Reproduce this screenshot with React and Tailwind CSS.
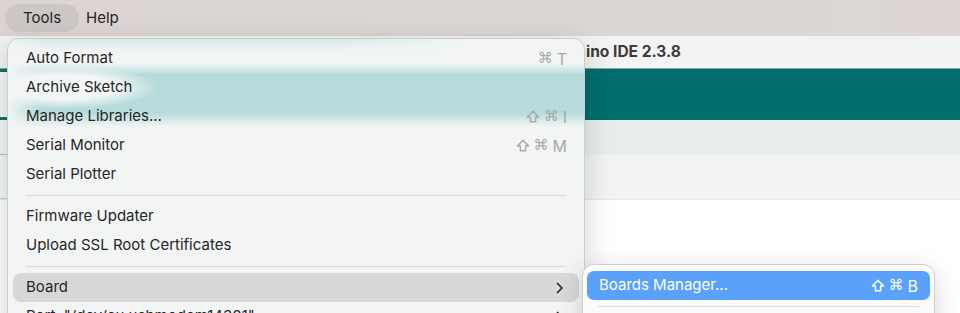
const Chevron = ({ className = '' }) => (
  <svg width="8" height="12" viewBox="0 0 8 12" className={className}>
    <path d="M1.5 1.5 L6 6 L1.5 10.5" fill="none" stroke="currentColor" strokeWidth="1.7" strokeLinecap="round" strokeLinejoin="round" />
  </svg>
);

const Shift = () => (
  <svg width="14" height="13" viewBox="0 0 14 13" className="shrink-0">
    <path d="M7 1.2 L12.6 7 H9.6 V11.8 H4.4 V7 H1.4 Z" fill="none" stroke="currentColor" strokeWidth="1.5" strokeLinejoin="round" />
  </svg>
);

const Keys = ({ shift, k }) => (
  <span className="flex items-center gap-[4px] font-['Inter',sans-serif] text-[16px]">
    {shift && <Shift />}
    <span className="font-['DejaVu_Sans',sans-serif] text-[15px]">⌘</span>
    <span>{k}</span>
  </span>
);

const Item = ({ label, shift, k, sub, active }) => (
  <div className={`relative h-[29px] mx-[5px] px-[13px] rounded-[8px] flex items-center justify-between ${active ? 'bg-[#d8d8d8]' : ''}`}>
    <span>{label}</span>
    {k && <span className="text-[#a8a9a9] mr-[-1px]"><Keys shift={shift} k={k} /></span>}
    {sub && <Chevron className="text-[#2a2a2a] mr-[2px]" />}
  </div>
);

const Sep = () => (
  <div className="relative h-[13px] flex items-center px-[18px]">
    <div className="h-px w-full bg-[#d9dcdc]" />
  </div>
);

export default function App() {
  return (
    <div className="relative w-[960px] h-[313px] overflow-hidden font-['Inter','Liberation_Sans',sans-serif] text-[15px] text-[#262626]">
      {/* macOS menu bar */}
      <div className="h-9 bg-gradient-to-r from-[#dcd4d2] via-[#dad7d4] to-[#ddd6d5] flex items-center pl-[5px]">
        <div className="h-[28px] px-[18px] rounded-full bg-[#cdc8c5] flex items-center">Tools</div>
        <div className="ml-[7px]">Help</div>
      </div>

      {/* IDE window behind */}
      <div className="flex flex-col h-[277px]">
        <div className="h-[33px] bg-[#f3f3f3] border-b border-[#8fa0a0] flex items-center">
          <div className="w-[585px]" />
          <span className="font-bold text-[#3b3b3b] text-[15.5px] ml-[1px]">ino IDE 2.3.8</span>
        </div>
        <div className="h-[51px] flex">
          <div className="w-[8px] bg-[#f7f8f8] border-y-[3px] border-[#0d7373]" />
          <div className="flex-1 bg-[#006e6e]" />
        </div>
        <div className="h-[35px] bg-[#e8eeee] flex">
          <div className="w-[8px] bg-[#f6f8f8] border-b border-[#9fd0d0]" />
        </div>
        <div className="h-[45px] bg-[#f2f4f4] border-b border-[#e6ecec] flex">
          <div className="w-[8px] bg-[#f6f8f8] border-b border-[#b8dcdc]" />
        </div>
        <div className="flex-1 bg-white" />
      </div>

      {/* Tools menu */}
      <div className="absolute left-[7px] top-[38px] w-[578px] h-[300px] pt-[5px] rounded-[12px] overflow-hidden bg-[#f3f5f5] border border-[#c9d0d0] shadow-[0_8px_30px_rgba(0,0,0,0.18)]">
        {/* soft tint of the window showing through the glass */}
        <div className="absolute left-0 right-0 top-0 h-[12px] bg-[linear-gradient(to_bottom,#d3e8e8,transparent)] [mask-image:linear-gradient(to_right,transparent,black_40px,black_55%,transparent_80%)]" />
        <div className="absolute left-0 right-0 top-[24px] h-[64px] bg-[linear-gradient(to_bottom,transparent,#b7dbdb_18%,#b7dbdb_78%,transparent)] [mask-image:linear-gradient(to_right,transparent,black_30px)]" />
        <div className="absolute left-[-40px] w-[190px] top-[26px] h-[44px] bg-[radial-gradient(closest-side,#f3f6f6_55%,transparent)]" />
        <Item label="Auto Format" k="T" />
        <Item label="Archive Sketch" />
        <Item label="Manage Libraries..." shift k="I" />
        <Item label="Serial Monitor" shift k="M" />
        <Item label="Serial Plotter" />
        <Sep />
        <Item label="Firmware Updater" />
        <Item label="Upload SSL Root Certificates" />
        <Sep />
        <Item label="Board" sub active />
        <Item label={'Port: "/dev/cu.usbmodem14301"'} sub />
      </div>

      {/* Board submenu */}
      <div className="absolute left-[582px] top-[264px] w-[353px] h-[80px] pt-[6px] rounded-[12px] bg-[#fbfbfb] border border-[#cfcfcf] shadow-[0_6px_24px_rgba(0,0,0,0.16)]">
        <div className="h-[29px] mx-[4px] px-[12px] rounded-[7px] bg-[#5aa1f9] text-white flex items-center justify-between">
          <span>Boards Manager...</span>
          <Keys shift k="B" />
        </div>
        <div className="h-[13px] flex items-center px-[15px]">
          <div className="h-px w-full bg-[#dcdcdc]" />
        </div>
      </div>
    </div>
  );
}
